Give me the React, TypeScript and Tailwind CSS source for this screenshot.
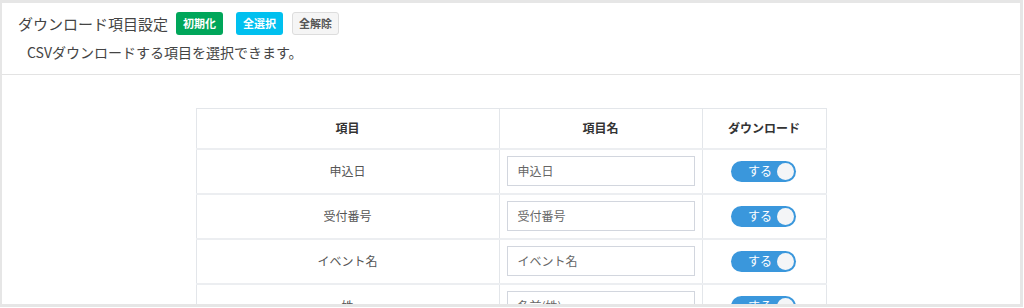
import React from "react";

const rows = [
  { label: "申込日", name: "申込日" },
  { label: "受付番号", name: "受付番号" },
  { label: "イベント名", name: "イベント名" },
  { label: "姓", name: "名前(姓)" },
];

function Toggle() {
  return (
    <div className="w-[65px] h-[21px] rounded-full bg-[#3a97dc] flex items-center justify-end pr-[2px] gap-[5px]">
      <span className="text-white text-[12px] leading-none">する</span>
      <span className="w-[17px] h-[17px] rounded-full bg-[#f4f5f7]" />
    </div>
  );
}

export default function App() {
  return (
    <div className="w-[1023px] h-[307px] border-t-[3px] border-l-[2px] border-r-[3px] border-b-[3px] border-[#e6e6e6] bg-white overflow-hidden font-['Noto_Sans_CJK_JP',sans-serif] text-[#333]">
      <div className="h-[72px] border-b border-[#e3e3e3] pt-[9px]">
        <div className="flex items-center h-[23px] pl-[16px]">
          <span className="text-[15px] text-[#444] leading-none">ダウンロード項目設定</span>
          <span className="ml-[8px] h-[23px] px-[7px] rounded-[3px] bg-[#00a65a] text-white text-[11px] font-bold flex items-center">初期化</span>
          <span className="ml-[13px] h-[23px] px-[7px] rounded-[3px] bg-[#00c0ef] text-white text-[11px] font-bold flex items-center">全選択</span>
          <span className="ml-[9px] h-[23px] px-[6px] rounded-[3px] bg-[#f5f5f5] border border-[#ddd] text-[#555] text-[11px] font-bold flex items-center">全解除</span>
        </div>
        <div className="pl-[25px] mt-[7px] text-[14px] leading-[20px] text-[#444]">CSVダウンロードする項目を選択できます。</div>
      </div>
      <div className="pt-[33px]">
        <table className="mx-auto w-[630px] border-collapse text-[12px] text-[#555] table-fixed">
          <colgroup>
            <col className="w-[303px]" />
            <col className="w-[203px]" />
            <col className="w-[124px]" />
          </colgroup>
          <thead>
            <tr className="h-[40px]">
              <th className="border border-[#e3e6ea] border-b-2 border-b-[#eceef1] font-bold text-[#333]">項目</th>
              <th className="border border-[#e3e6ea] border-b-2 border-b-[#eceef1] font-bold text-[#333]">項目名</th>
              <th className="border border-[#e3e6ea] border-b-2 border-b-[#eceef1] font-bold text-[#333]">ダウンロード</th>
            </tr>
          </thead>
          <tbody>
            {rows.map((r) => (
              <tr key={r.label} className="h-[45px]">
                <td className="border border-[#e3e6ea] border-b-2 border-b-[#eceef1] text-center">{r.label}</td>
                <td className="border border-[#e3e6ea] border-b-2 border-b-[#eceef1] px-[7px]">
                  <div className="h-[30px] w-[188px] border border-[#d2d6de] flex items-center pl-[10px] text-[#666] text-[12px]">
                    {r.name}
                  </div>
                </td>
                <td className="border border-[#e3e6ea] border-b-2 border-b-[#eceef1]">
                  <div className="flex justify-center pr-[1px]">
                    <Toggle />
                  </div>
                </td>
              </tr>
            ))}
          </tbody>
        </table>
      </div>
    </div>
  );
}
